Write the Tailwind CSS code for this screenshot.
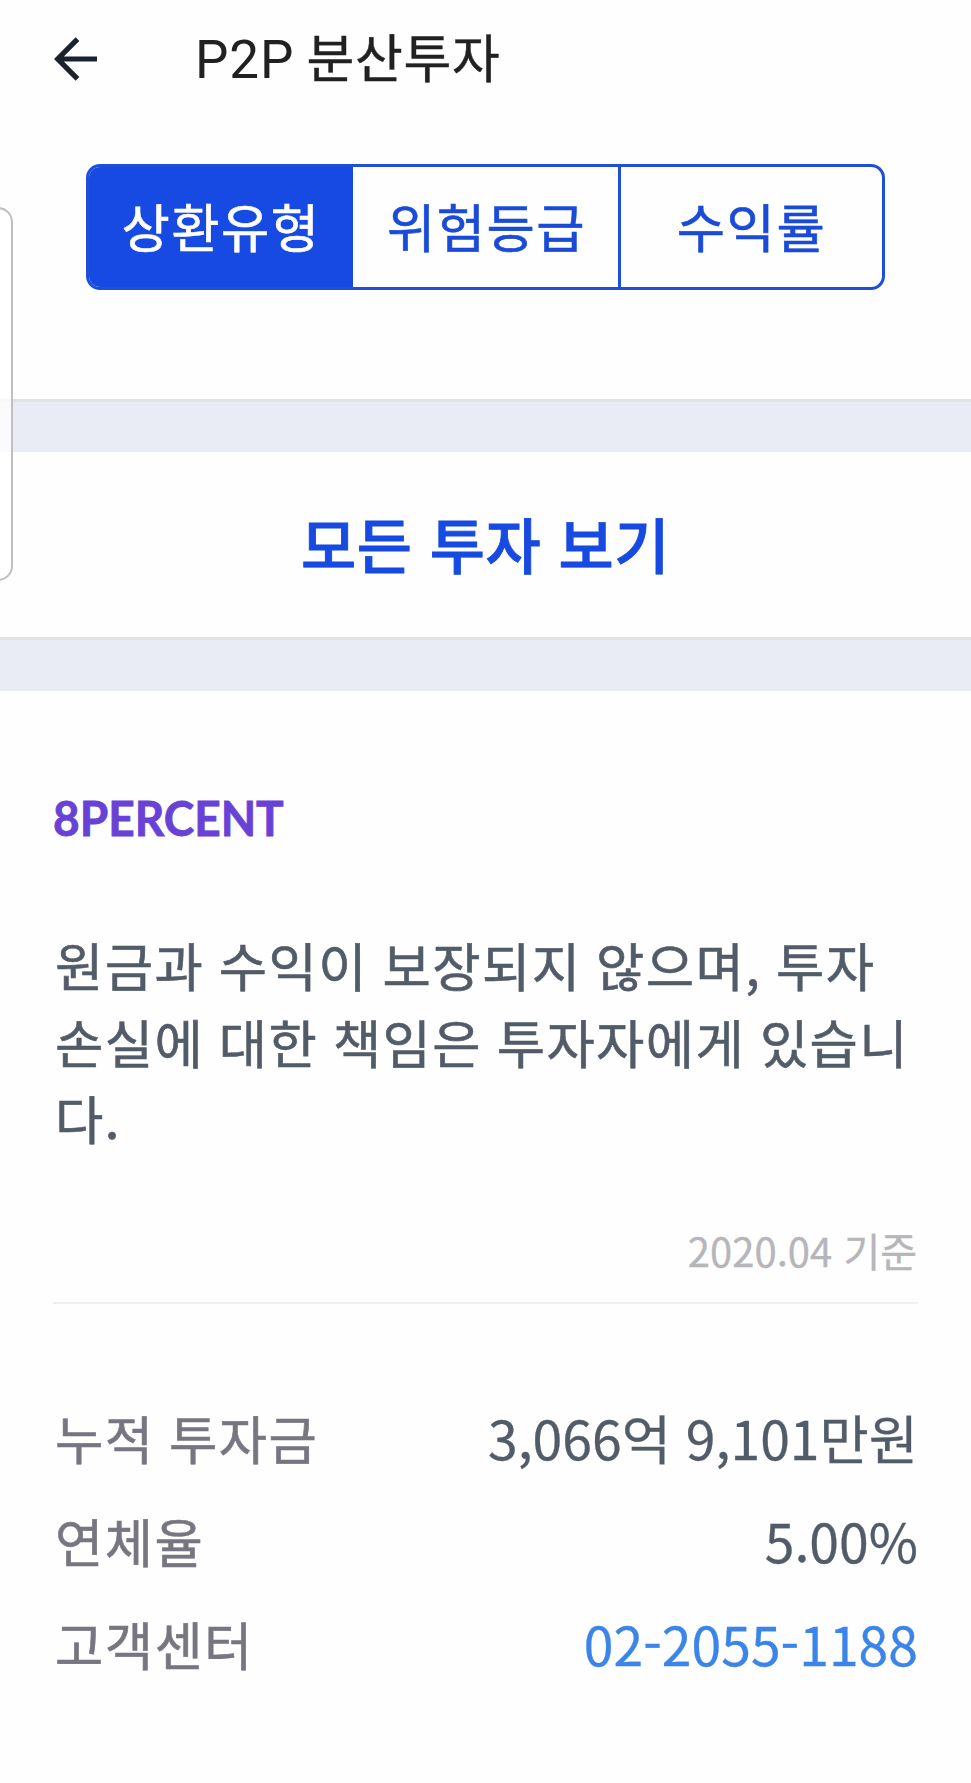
<!DOCTYPE html>
<html lang="ko">
<head>
<meta charset="utf-8">
<title>P2P 분산투자</title>
<script src="https://cdn.jsdelivr.net/npm/@tailwindcss/browser@4"></script>
</head>
<body class="relative min-h-[1783px] overflow-x-hidden bg-[#fefefe] font-['Noto_Sans_CJK_KR',sans-serif] text-[53.5px] text-[#525b68]">
  <header class="flex h-[118px] items-center pl-[54px] text-[#212121]">
    <svg class="h-[44px] w-[44px] shrink-0" viewBox="0 0 44 44" fill="none" stroke="#1a222e" stroke-width="5.2"><path d="M43 22H4M23.5 2.2 3.7 22l19.8 19.8"/></svg>
    <h1 class="ml-[97px] whitespace-nowrap pt-[3px] font-[Roboto,'Noto_Sans_CJK_KR',sans-serif] text-[53px] leading-[118px]"><span class="tracking-[0.9px] [word-spacing:-2px]">P2P </span><span class="text-[52px] tracking-[0.7px] [-webkit-text-stroke:0.4px]">분산투자</span></h1>
  </header>

  <nav class="mt-[46px] ml-[86px] grid h-[126px] w-[799px] grid-cols-[264px_265px_1fr] overflow-hidden rounded-[14px] border-[3px] border-[#1f4fd8] text-center text-[52.5px] leading-[117px] tracking-[1.5px] text-[#1a4bd8] [-webkit-text-stroke:0.6px]">
    <div class="bg-[#164ae2] text-white">상환유형</div>
    <div class="pl-[2px]">위험등급</div>
    <div class="border-l-[3px] border-[#1f4fd8]">수익률</div>
  </nav>

  <div class="mt-[109px] h-[53px] border-t-[3px] border-[#e1e2e4] bg-[#e9ecf4]"></div>
  <div class="h-[185px] text-center text-[60px] font-medium leading-[181px] tracking-[0.5px] text-[#164ae0] [-webkit-text-stroke:0.9px]">모든 투자 보기</div>
  <div class="h-[54px] border-t-[3px] border-[#e0e1e4] bg-[#e9ecf4]"></div>

  <section class="px-[53px] pt-[91px]">
    <h2 class="h-[70px] w-max origin-left scale-x-[0.947] whitespace-nowrap font-[Lato,sans-serif] text-[48.6px] font-bold leading-[70px] text-[#6842d6] [-webkit-text-stroke:0.8px]">8PERCENT</h2>
    <p class="mt-[74px] pl-[2px] whitespace-nowrap text-[52.5px] leading-[76.7px] tracking-[1.4px] [-webkit-text-stroke:0.6px] [word-spacing:-1.4px]">원금과 수익이 보장되지 않으며, 투자<br>손실에 대한 책임은 투자자에게 있습니<br>다.</p>
    <div class="mt-[64px] h-[84px] border-b-2 border-[#f0f0f1] pr-px text-right text-[40px] leading-[60px] text-[#b6b6ba] [-webkit-text-stroke:0.3px]">2020.04 기준</div>
    <dl class="mt-[82px] pl-[2px] leading-[102.7px] [-webkit-text-stroke:0.3px]">
      <div class="flex justify-between"><dt class="text-[52.5px] tracking-[1.4px] text-[#777680] [-webkit-text-stroke:0.6px] [word-spacing:-1.4px]">누적 투자금</dt><dd>3,066억 9,101만원</dd></div>
      <div class="flex justify-between"><dt class="text-[52.5px] tracking-[1.4px] text-[#777680] [-webkit-text-stroke:0.6px]">연체율</dt><dd>5.00%</dd></div>
      <div class="flex justify-between"><dt class="text-[52.5px] tracking-[1.4px] text-[#777680] [-webkit-text-stroke:0.6px]">고객센터</dt><dd class="text-[#3b84e8]">02-2055-1188</dd></div>
    </dl>
  </section>

  <div class="absolute top-[207px] left-[-30px] h-[374px] w-[43px] rounded-[15px] border-2 border-[#bfbfbf] bg-white/80"></div>
</body>
</html>
